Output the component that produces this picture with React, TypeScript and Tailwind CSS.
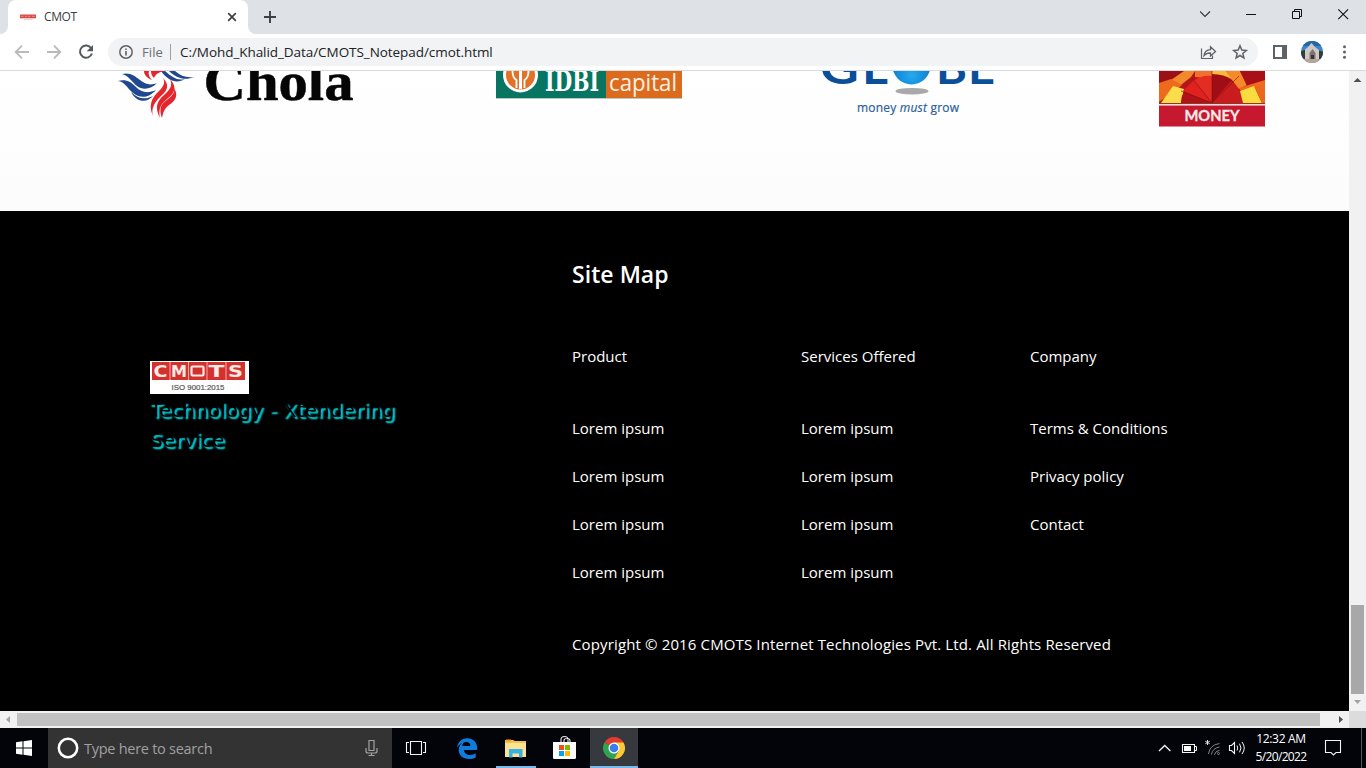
import React from "react";

const UI = "font-['Open_Sans','Noto_Sans',sans-serif]";

function TabStrip() {
  return (
    <div className="flex h-[34px] shrink-0 bg-[#dee1e6]">
      <div className="flex w-2 items-end">
        <div className="h-2 w-2 bg-white">
          <div className="h-2 w-2 rounded-br-lg bg-[#dee1e6]" />
        </div>
      </div>
      <div className="flex w-60 items-center rounded-t-lg bg-white pl-3 pr-2.5">
        <svg width="16" height="8" viewBox="0 0 16 8">
          <rect x="0" y="1.500" width="16" height="3.800" fill="#dc4a44" />
          <path d="M1 3.300h2.500M5 3.300h2M8 3.300h2.500M12 3.300h3" stroke="#e98a85" strokeWidth="1" />
          <path d="M4 6.700h8" stroke="#d5d5d5" strokeWidth="1" />
        </svg>
        <span className="ml-2 text-[12px] leading-4 tracking-[-0.4px] text-[#3c4043]">CMOT</span>
        <svg className="ml-auto" width="12" height="12" viewBox="0 0 12 12">
          <path d="M2.2 2.2l7.6 7.6M9.8 2.2L2.2 9.8" stroke="#3c4043" strokeWidth="1.7" />
        </svg>
      </div>
      <div className="flex w-2 items-end">
        <div className="h-2 w-2 bg-white">
          <div className="h-2 w-2 rounded-bl-lg bg-[#dee1e6]" />
        </div>
      </div>
      <svg className="ml-2 mt-[11px]" width="12" height="12" viewBox="0 0 12 12">
        <path d="M6 0v12M0 6h12" stroke="#3c4043" strokeWidth="1.9" />
      </svg>
      <svg className="ml-auto" width="166" height="34" viewBox="1200 0 166 34" fill="none" stroke="#111">
        <path d="M1200 11.5l5 5 5-5" strokeWidth="1.1" stroke="#333" />
        <path d="M1246 14.5h10" strokeWidth="1" />
        <path d="M1294.5 11.5v-2h7v7h-2M1292.500 11.500h7v7h-7z" strokeWidth="1" />
        <path d="M1338.300 9.300l9.800 9.800M1348.100 9.300l-9.800 9.800" strokeWidth="1.1" />
      </svg>
    </div>
  );
}

function Toolbar() {
  return (
    <div className="flex h-[37px] shrink-0 items-center border-b border-[#d8dade] bg-white">
      <svg width="108" height="36" viewBox="0 34 108 36" fill="none">
        <path d="M29 52H16M22 45.700L15.700 52l6.300 6.300" stroke="#bababa" strokeWidth="1.8" />
        <path d="M47 52h13M54 45.700l6.300 6.300-6.300 6.300" stroke="#bababa" strokeWidth="1.800" />
        <path d="M91.200 48.300A6.100 6.100 0 1 0 91.900 53.500" stroke="#54585d" strokeWidth="2" />
        <path d="M93 45v6.300h-6.300z" fill="#54585d" />
      </svg>
      <div className="flex h-7 w-[1150px] items-center rounded-full bg-[#f1f3f4] pl-[11px]">
        <svg width="14" height="14" viewBox="0 0 14 14" fill="none">
          <circle cx="7" cy="7" r="6.200" stroke="#5f6368" strokeWidth="1.500" />
          <path d="M7 6v4.500M7 3.500v1.500" stroke="#5f6368" strokeWidth="1.600" />
        </svg>
        <span className="ml-[9px] w-[21px] text-[13px] leading-4 tracking-[0.1px] text-[#6b6f74]">File</span>
        <span className="ml-[7px] h-4 w-px bg-[#9aa0a6]" />
        <span className="ml-[9px] whitespace-nowrap text-[13.5px] leading-4 tracking-[-0.06px] text-[#202124]">
          C:/Mohd_Khalid_Data/CMOTS_Notepad/cmot.html
        </span>
        <svg className="ml-auto" width="58" height="28" viewBox="1200 38 58 28" fill="none" stroke="#5f6368">
          <path d="M1201.500 48.500v10h11v-3" strokeWidth="1.200" />
          <path d="M1204 55.500c.5-3.500 2.700-5.700 6.500-5.800v-3l5 4.800-5 4.500v-3c-3 0-5 .7-6.500 2.500z" strokeWidth="1.300" />
          <path d="M1240 45.800l1.800 4.300 4.500.4-3.500 3 1.100 4.400-3.900-2.400-3.900 2.400 1.100-4.400-3.500-3 4.500-.4z" strokeWidth="1.500" />
        </svg>
      </div>
      <svg width="108" height="36" viewBox="1258 34 108 36">
        <defs>
          <clipPath id="avatar"><circle cx="1312" cy="52" r="11" /></clipPath>
        </defs>
        <path d="M1273 45h14v14h-14zM1275 47v10h7V47z" fill="#5f6368" fillRule="evenodd" />
        <g clipPath="url(#avatar)">
          <path d="M1300 40h24v24h-24z" fill="#3d86c6" />
          <path d="M1300 40h24v6h-24z" fill="#2268a8" />
          <path d="M1300 52l4-2 5 1 8-1 7 2v7h-24z" fill="#343c37" />
          <path d="M1305 59V49.500l3-2.500 3.500-4 3.500 4 4 3v9z" fill="#cfc9c6" />
          <path d="M1309.500 60v-7l3-4 3 4v7z" fill="#7d7274" />
          <path d="M1311 60v-5h3v5z" fill="#38343c" />
          <path d="M1302 59h20v5h-20z" fill="#b9a692" />
        </g>
        <circle cx="1344.500" cy="46.800" r="1.500" fill="#5f6368" />
        <circle cx="1344.500" cy="52" r="1.500" fill="#5f6368" />
        <circle cx="1344.500" cy="57.200" r="1.500" fill="#5f6368" />
      </svg>
    </div>
  );
}

function CholaLogo() {
  return (
    <svg className="ml-[100px]" width="270" height="69" viewBox="100 71 270 69">
      <g fill="#21488f">
        <path d="M118 81c8-2 13 1 18 6s11 7 20 3c-8 9-17 8-23 3s-8-11-15-12z" />
        <path d="M122 74c8-2 13 2 18 6s10 6 17 3c-6 7-15 7-20 3s-9-11-15-12z" />
        <path d="M131 92c7 7 14 8 22 4-6 7-16 7-22-4z" />
        <path d="M165 71c7 6 12 10 20 8-8 5-17 2-24-8z" />
        <path d="M175 71c6 5 11 7 19 6-9 4-18 1-25-6z" />
      </g>
      <g fill="#e5252c">
        <path d="M163 78c8 8 3 14-3 19-6 6-9 12-7 19-5-11-1-18 5-24 5-5 8-9 5-14z" />
        <path d="M170 79c8 9 4 15-3 20-6 5-9 10-7 19-5-10-4-16 4-23 6-5 9-10 6-16z" />
        <path d="M174 88c5 8 1 13-5 17-5 4-6 8-7 13-4-12 1-15 6-19s7-7 6-11z" />
        <path d="M144 71h5c-1 3 0 6 3 9-5-2-8-5-8-9zM151 71h15c-6 1-10 2-12 7-2-2-3-4-3-7z" />
      </g>
      <text x="203.500" y="100" fontFamily="Liberation Serif, serif" fontWeight="700" fontSize="55" textLength="150" lengthAdjust="spacingAndGlyphs" fill="#050505" stroke="#050505" strokeWidth=".5">Chola</text>
    </svg>
  );
}

function IdbiLogo() {
  return (
    <svg className="ml-[110px]" width="220" height="69" viewBox="480 71 220 69">
      <path d="M496 71h110v28h-110z" fill="#087462" />
      <path d="M606 71h76v28h-76z" fill="#dc6b1d" />
      <path d="M496 98.500h186" stroke="#b9c9bd" strokeWidth="1" />
      <circle cx="520.500" cy="75" r="16" fill="#e17227" stroke="#fff" strokeWidth="3" />
      <path d="M519 71h3v18h-3z" fill="#fff" />
      <path d="M512.500 71c0 5 2 8 4 9v8M528.500 71c0 5-2 8-4 9v8" stroke="#fff" strokeWidth="1.800" fill="none" />
      <text x="545" y="90.700" fontFamily="DejaVu Serif, serif" fontWeight="700" fontSize="27" textLength="54" lengthAdjust="spacingAndGlyphs" fill="#fff">IDBI</text>
      <text x="609" y="90.500" fontFamily="Open Sans, sans-serif" fontSize="23" textLength="68" lengthAdjust="spacingAndGlyphs" fill="#fdf0e2">capital</text>
    </svg>
  );
}

function GlobeLogo() {
  return (
    <svg className="ml-[100px]" width="220" height="69" viewBox="800 71 220 69">
      <defs>
        <radialGradient id="ball" cx=".5" cy=".75" r=".6">
          <stop offset="0" stopColor="#24aaf0" />
          <stop offset="1" stopColor="#0879ca" />
        </radialGradient>
      </defs>
      <g fontFamily="Lato, sans-serif" fontWeight="700" fontSize="43" fill="#0b4f9b">
        <text x="820" y="84" textLength="39" lengthAdjust="spacingAndGlyphs">G</text>
        <text x="862" y="84" textLength="26" lengthAdjust="spacingAndGlyphs">L</text>
        <text x="936" y="84" textLength="31" lengthAdjust="spacingAndGlyphs">B</text>
        <text x="968" y="84" textLength="27" lengthAdjust="spacingAndGlyphs">E</text>
      </g>
      <circle cx="911.500" cy="65.500" r="19" fill="url(#ball)" />
      <ellipse cx="912" cy="91.200" rx="16.500" ry="3.300" fill="#a9a9a9" />
      <text x="857" y="111.500" fontFamily="Open Sans, sans-serif" fontSize="12" textLength="102" fill="#2b6198" stroke="#2b6198" strokeWidth=".2">
        money <tspan fontStyle="italic">must</tspan> grow
      </text>
    </svg>
  );
}

function MoneyLogo() {
  return (
    <svg className="ml-[120px]" width="150" height="69" viewBox="1140 71 150 69">
      <path d="M1159 71h106v32h-106z" fill="#b5151b" />
      <path d="M1159 71h25l-9 10-7 5-9-4z" fill="#9c1018" />
      <path d="M1184 71h11l-4 6-10 8-10-5z" fill="#f08a2a" />
      <path d="M1159 83l12-4 11 6-6 5-17 12z" fill="#ee6a1d" />
      <path d="M1161 103l12-17 11 3-3 14z" fill="#fbdc4d" />
      <path d="M1195 71h17v5l-8 2-9-1z" fill="#f2702a" />
      <path d="M1181 103q0-13 12-21l19 21z" fill="#b01218" />
      <path d="M1183 91l10-10 19 22z" fill="#e0211f" />
      <path d="M1193 81q8-6 19-5v27z" fill="#e32c22" />
      <path d="M1212 73q12 0 21 8l-21 22z" fill="#a00d14" />
      <path d="M1231 81q12 8 12 22h-31z" fill="#c81c1e" />
      <path d="M1212 71h14l7 9q-9-6-21-6z" fill="#f9b936" />
      <path d="M1226 71h14l7 14-8 4-7-9z" fill="#f48a29" />
      <path d="M1240 71h25v10l-18 5z" fill="#a80f17" />
      <path d="M1265 80v9l-24 2-2-3z" fill="#ef6a21" />
      <path d="M1240 91l14-5 8 17h-19z" fill="#fbdc3e" />
      <path d="M1254 86l11 3v14h-3z" fill="#ec681e" />
      <path d="M1212 103V71M1212 103l-20-25M1212 103l27-27M1212 103l-31-12" stroke="#7d130f" strokeWidth=".6" />
      <path d="M1159 103.500h106" stroke="#8c3a25" strokeWidth="1" />
      <path d="M1159 104.500h106" stroke="#f3dcdc" strokeWidth="1" />
      <path d="M1159 105.500h106v21h-106z" fill="#c6192f" />
      <text x="1184.500" y="121" fontFamily="Lato, sans-serif" fontWeight="700" fontSize="15.500" textLength="55" lengthAdjust="spacingAndGlyphs" fill="#fbeaea" stroke="#fbeaea" strokeWidth=".3">MONEY</text>
    </svg>
  );
}

const columns = [
  { title: "Product", links: ["Lorem ipsum", "Lorem ipsum", "Lorem ipsum", "Lorem ipsum"] },
  { title: "Services Offered", links: ["Lorem ipsum", "Lorem ipsum", "Lorem ipsum", "Lorem ipsum"] },
  { title: "Company", links: ["Terms & Conditions", "Privacy policy", "Contact"] },
];

function Footer() {
  return (
    <footer className="flex h-[500px] bg-black text-white">
      <div className="ml-[150px] w-[422px] pt-[150px]">
        <svg width="99" height="33" viewBox="0 0 99 33">
          <path d="M0 0h99v33H0z" fill="#fff" />
          <path d="M2 1h93v18H2z" fill="#d3312e" />
          <path d="M20 1v18M38.500 1v18M57 1v18M76 1v18" stroke="#f1aaa8" strokeWidth="1" />
          <g fontFamily="DejaVu Sans, sans-serif" fontWeight="700" fontSize="15" fill="#fbe9e5">
            <text x="3.500" y="15.500" textLength="14" lengthAdjust="spacingAndGlyphs">C</text>
            <text x="21" y="15.500" textLength="16" lengthAdjust="spacingAndGlyphs">M</text>
            <text x="58.500" y="15.500" textLength="16" lengthAdjust="spacingAndGlyphs">T</text>
            <text x="78" y="15.500" textLength="15" lengthAdjust="spacingAndGlyphs">S</text>
          </g>
          <rect x="41.500" y="5.500" width="12" height="9" rx="1" fill="none" stroke="#fbe9e5" strokeWidth="2.200" />
          <text x="21.500" y="29" fontFamily="Liberation Sans, sans-serif" fontSize="8" textLength="53" lengthAdjust="spacingAndGlyphs" fill="#555" stroke="#555" strokeWidth=".2">ISO 9001:2015</text>
        </svg>
        <p className="mt-px w-[260px] font-['DejaVu_Sans',Verdana,sans-serif] text-[20px] leading-[30px] tracking-[0.08px] text-black [text-shadow:2px_2px_2px_#00ced1,2px_2px_1px_#00a5ac]">
          Technology - Xtendering Service
        </p>
      </div>
      <div>
        <h2 className="mt-[45px] text-[23px] font-semibold leading-9 tracking-[0.05px]">Site Map</h2>
        <div className="mt-[52px] flex text-[15px] leading-6">
          {columns.map((column) => (
            <div key={column.title} className="w-[229px]">
              <h3>{column.title}</h3>
              <ul className="mt-12 flex flex-col gap-6">
                {column.links.map((link, i) => (
                  <li key={i}>{link}</li>
                ))}
              </ul>
            </div>
          ))}
        </div>
        <p className="mt-12 whitespace-nowrap text-[15px] leading-6 tracking-[0.135px]">
          Copyright © 2016 CMOTS Internet Technologies Pvt. Ltd. All Rights Reserved
        </p>
      </div>
    </footer>
  );
}

function Taskbar() {
  return (
    <div className="flex h-10 shrink-0 bg-[#02040a]">
      <svg width="48" height="40" viewBox="0 728 48 40" fill="#fff">
        <path d="M16 742.200l6.500-.9v6.200H16zM23.500 741.200l8.500-1.200v7.500h-8.500zM16 748.500h6.500v6.200l-6.500-.9zM23.500 748.500H32v7.500l-8.500-1.200z" />
      </svg>
      <div className="flex w-[344px] items-center bg-[#333333] pl-[9px] pr-[13px]">
        <svg width="22" height="22" viewBox="0 0 22 22">
          <circle cx="11" cy="11" r="9.200" fill="none" stroke="#fff" strokeWidth="2.500" />
        </svg>
        <span className="ml-[5px] mt-px text-[14.500px] leading-5 tracking-[-0.27px] text-[#a0a0a0]">Type here to search</span>
        <svg className="ml-auto" width="14" height="18" viewBox="0 0 14 18" fill="none" stroke="#a3a3a3" strokeWidth="1.200">
          <path d="M4 1.500h5v10h-5zM1 9v3q0 2 2 2h7q2 0 2-2V9M6.500 14v2.500M3.500 16.500h6" />
        </svg>
      </div>
      <svg width="98" height="40" viewBox="392 728 98 40">
        <path d="M410.500 741.500h11v13h-11zM409 742.500h-2.500v10h2.500M423 742.500h2.500v10H423" fill="none" stroke="#f5f5f5" strokeWidth="1.100" />
        <path d="M457 747.500c.6-5 4.500-9.300 10.200-9.300 6.500 0 10 4.800 10 9.500v2.300h-13.200c.2 3.300 3 5 6 5 2.200 0 4.100-.7 5.700-1.700v4.100c-1.800 1-4.100 1.600-6.700 1.600-6.300 0-10.300-4-10.300-9.300 0-3.800 2.200-6.500 5.300-7.800-1 1.100-1.600 2.800-1.800 4.200h8.200c0-2.900-1.600-4.200-4.200-4.200-3.600 0-7 2.200-9.200 5.600z" fill="#0f7cdd" />
      </svg>
      <div className="h-10 w-[6px]" />
      <div className="h-10 w-10 border-b-2 border-[#76b9ed]">
        <svg width="40" height="38" viewBox="496 728 40 38">
          <path d="M505 740h8l2 1h11v16h-21z" fill="#f5c24c" />
          <path d="M505 743h21v14h-21z" fill="#fde293" />
          <path d="M506 739.500h5v2h-5z" fill="#eda91c" />
          <path d="M509 749h13.500v8.500h-3.500V753.500h-6.500v4h-3.500z" fill="#38b0e6" />
        </svg>
      </div>
      <svg width="54" height="40" viewBox="536 728 54 40">
        <path d="M561 742v-2.500q0-3 3.500-3t3.500 3v2.500M564 742v-1.500q0-2 3-2t3 2v1.500" fill="none" stroke="#e8e8e8" strokeWidth="1.100" />
        <path d="M553 742h23v15.500q0 1.500-1.500 1.500h-20q-1.500 0-1.500-1.500z" fill="#fff" />
        <path d="M559 745h5v5h-5z" fill="#f04e22" />
        <path d="M565 745h5v5h-5z" fill="#7fba00" />
        <path d="M559 751h5v5h-5z" fill="#00a4ef" />
        <path d="M565 751h5v5h-5z" fill="#ffb900" />
      </svg>
      <div className="h-10 w-12 border-b-2 border-[#76b9ed] bg-[#36393e]">
        <svg width="48" height="38" viewBox="-24 -20 48 38">
          <path d="M0 0L-9.530-5.500A11 11 0 0 1 9.530-5.500z" fill="#e33b2e" />
          <path d="M0 0L-9.530-5.500A11 11 0 0 0 0 11L4.800 2.700z" fill="#31a350" />
          <path d="M0 0L4.800 2.700 0 11A11 11 0 0 0 9.530-5.500H0z" fill="#fcc934" />
          <circle r="5.500" fill="#fff" />
          <circle r="4.300" fill="#3b7de8" />
        </svg>
      </div>
      <svg className="ml-auto" width="96" height="40" viewBox="1154 728 96 40" fill="none" stroke="#f4f4f4">
        <path d="M1159 751l5.700-5.500 5.700 5.500" strokeWidth="1.300" />
        <path d="M1182.500 744.500h12v8h-12z" strokeWidth="1.100" />
        <path d="M1184 746h7v5h-7z" fill="#fff" stroke="none" />
        <path d="M1195 746.500h1.500v4h-1.500" strokeWidth="1" />
        <path d="M1207.500 740v5M1205.300 741.200l4.400 2.600M1205.300 743.800l4.400-2.600" strokeWidth=".9" />
        <g stroke="#858585" strokeWidth="1">
          <path d="M1208.500 754q1-9 11-10.500M1211.500 754.500q1-6.500 8-7.500M1214.500 754.800q.8-3.800 5-4.500" />
          <circle cx="1218.500" cy="753.500" r="1" />
        </g>
        <path d="M1229.500 745.500h2l3-3v11l-3-3h-2z" strokeWidth="1.100" />
        <path d="M1237 745.500q1.500 2.500 0 5M1239.500 743.700q3 4.300 0 8.600M1242 742q4.500 6 0 12" strokeWidth="1" />
      </svg>
      <div className="flex w-[62px] flex-col items-center pt-[2px] text-[12px] leading-[18px] text-white">
        <span className="tracking-[-0.3px]">12:32 AM</span>
        <span className="tracking-[-0.65px]">5/20/2022</span>
      </div>
      <svg width="54" height="40" viewBox="1312 728 54 40" fill="none">
        <path d="M1325.500 740.500h15v12h-4.500l-2.500 2.500-2.500-2.500h-5.500z" stroke="#f4f4f4" strokeWidth="1.100" />
        <path d="M1361.500 728v40" stroke="#55585c" />
      </svg>
    </div>
  );
}

export default function App() {
  return (
    <div className={`flex h-[768px] w-[1366px] flex-col overflow-hidden ${UI}`}>
      <TabStrip />
      <Toolbar />
      <div className="flex h-[640px] shrink-0">
        <main className="w-[1349px] overflow-hidden">
          <section className="flex h-[140px] items-start bg-[linear-gradient(to_bottom,#ffffff,#fcfcfc)]">
            <CholaLogo />
            <IdbiLogo />
            <GlobeLogo />
            <MoneyLogo />
          </section>
          <Footer />
        </main>
        <div className="flex w-[17px] flex-col items-center bg-[#f1f1f1]">
          <svg width="17" height="17" viewBox="0 0 17 17"><path d="M4.500 11l4-4 4 4z" fill="#505050" /></svg>
          <div className="mt-auto h-[89px] w-[13px] bg-[#a8a8a8]" />
          <svg width="17" height="17" viewBox="0 0 17 17"><path d="M5 6h7l-3.500 4z" fill="#a3a3a3" /></svg>
        </div>
      </div>
      <div className="flex h-[17px] shrink-0 items-center bg-[#f1f1f1]">
        <svg width="17" height="17" viewBox="0 0 17 17"><path d="M10 5v7L6 8.500z" fill="#a3a3a3" /></svg>
        <div className="h-[13px] w-[1303px] bg-[#c1c1c1]" />
        <svg className="ml-3" width="17" height="17" viewBox="0 0 17 17"><path d="M7 5v7l4-3.500z" fill="#505050" /></svg>
        <div className="h-[17px] w-[17px] bg-[#dcdcdc]" />
      </div>
      <Taskbar />
    </div>
  );
}
